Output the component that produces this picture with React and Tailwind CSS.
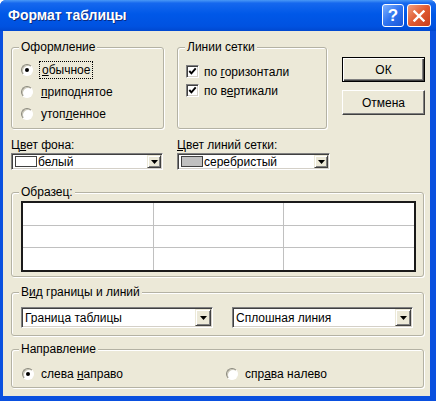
import React from "react";

const font = { fontFamily: '"Liberation Sans", Arial, sans-serif' };

function Radio({ checked }) {
  return (
    <span className="flex h-[12px] w-[12px] shrink-0 items-center justify-center rounded-full border border-t-[#8a887c] border-l-[#8a887c] border-b-white border-r-white bg-white shadow-[inset_1px_1px_0_#c9c6b6]">
      {checked && <span className="h-[4px] w-[4px] rounded-full bg-black" />}
    </span>
  );
}

function Checkbox() {
  return (
    <span className="flex h-[13px] w-[13px] shrink-0 items-center justify-center border border-t-[#808080] border-l-[#808080] border-b-white border-r-white bg-white shadow-[inset_1px_1px_0_#404040,inset_-1px_-1px_0_#d4d0c8]">
      <svg width="9" height="9" viewBox="0 0 9 9">
        <path d="M1.3 4l2.1 2.3 4.3-5" fill="none" stroke="#000" strokeWidth="1.9" />
      </svg>
    </span>
  );
}

function DropBtn({ big }) {
  return (
    <span
      className={
        "flex shrink-0 items-center justify-center border border-t-[#ece9d8] border-l-[#ece9d8] border-b-[#404040] border-r-[#404040] bg-[#ece9d8] shadow-[inset_1px_1px_0_#fff,inset_-1px_-1px_0_#808080] " +
        (big ? "h-[17px] w-[16px]" : "h-[13px] w-[14px]")
      }
    >
      <svg width="7" height="4" viewBox="0 0 7 4">
        <polygon points="0,0 7,0 3.5,4" fill="#000" />
      </svg>
    </span>
  );
}

function Combo({ className, swatch, text, big }) {
  return (
    <div
      className={
        "flex items-center border border-t-[#808080] border-l-[#808080] border-b-white border-r-white bg-white p-[1px] shadow-[inset_1px_1px_0_#404040,inset_-1px_-1px_0_#d4d0c8] " +
        className
      }
    >
      {swatch && (
        <span className={"ml-[2px] h-[11px] w-[22px] shrink-0 border border-[#404040] " + swatch} />
      )}
      <span className={"flex-1 truncate text-[12px] leading-none text-black " + (swatch ? "pl-[1px]" : "pl-[2px]")}>
        {text}
      </span>
      <DropBtn big={big} />
    </div>
  );
}

function Group({ label, className, children }) {
  return (
    <fieldset
      className={
        "rounded-[3px] border border-[#b4b2a4] shadow-[1px_1px_0_#fff,inset_1px_1px_0_#fff] " + className
      }
    >
      <legend className="ml-[7px] h-[14px] bg-[#ece9d8] px-[2px] text-[12px] leading-[14px] text-black">
        {label}
      </legend>
      {children}
    </fieldset>
  );
}

export default function App() {
  return (
    <div style={font} className="flex h-[401px] w-[436px] flex-col rounded-t-[6px] bg-[#0a50df]">
      {/* title bar */}
      <div className="flex h-[31px] shrink-0 items-center rounded-t-[6px] bg-[linear-gradient(to_bottom,#4a98f6_0%,#1668ee_10%,#0058e8_45%,#0052e0_85%,#0048d0_100%)] pl-[8px] pr-[5px]">
        <span className="flex-1 text-[14px] font-bold text-white [text-shadow:1px_1px_0_#0a2a80]">
          Формат таблицы
        </span>
        <div className="flex gap-[3px]">
          <span className="flex h-[23px] w-[22px] items-center justify-center rounded-[3px] border border-white bg-[linear-gradient(135deg,#7fb2ff_0%,#2f74f0_50%,#1a56d8_100%)] text-[17px] font-bold leading-none text-white">
            ?
          </span>
          <span className="flex h-[23px] w-[24px] items-center justify-center rounded-[3px] border border-white bg-[linear-gradient(135deg,#f0a080_0%,#e05a30_50%,#c83c1a_100%)]">
            <svg width="12" height="12" viewBox="0 0 12 12">
              <path d="M1.5 1.5l9 9M10.5 1.5l-9 9" stroke="#fff" strokeWidth="2.4" strokeLinecap="square" />
            </svg>
          </span>
        </div>
      </div>

      {/* client area */}
      <div className="mb-[5px] ml-[3px] mr-[6px] flex flex-1 flex-col bg-[#ece9d8] text-[12px] text-black">
        {/* row 1 */}
        <div className="flex pl-[8px] pt-[9px]">
          <Group label="Оформление" className="h-[89px] w-[153px]">
            <div className="flex flex-col pl-[9px] pt-[5px]">
              <div className="flex h-[22px] items-center gap-[6px]">
                <Radio checked />
                <span className="border border-dotted border-black px-[2px] py-[1px] leading-[14px]">
                  <u>о</u>бычное
                </span>
              </div>
              <div className="flex h-[22px] items-center gap-[7px]">
                <Radio />
                <span className="px-[1px]">
                  <u>п</u>риподнятое
                </span>
              </div>
              <div className="flex h-[22px] items-center gap-[7px]">
                <Radio />
                <span className="px-[1px]">
                  утоп<u>л</u>енное
                </span>
              </div>
            </div>
          </Group>

          <Group label="Линии сетки" className="ml-[13px] h-[89px] w-[150px]">
            <div className="flex flex-col pl-[8px] pt-[8px]">
              <div className="flex h-[19px] items-center gap-[5px]">
                <Checkbox />
                <span>
                  по <u>г</u>оризонтали
                </span>
              </div>
              <div className="flex h-[19px] items-center gap-[5px]">
                <Checkbox />
                <span>
                  по в<u>е</u>ртикали
                </span>
              </div>
            </div>
          </Group>

          <div className="ml-[15px] mt-[17px] flex w-[83px] flex-col gap-[8px]">
            <button className="flex h-[25px] items-center justify-center border border-black bg-[#ece9d8] text-[12px] shadow-[inset_1px_1px_0_#fff,inset_-1px_-1px_0_#404040,inset_-2px_-2px_0_#808080]">
              ОК
            </button>
            <button className="flex h-[25px] items-center justify-center border border-t-white border-l-white border-b-[#404040] border-r-[#404040] bg-[#ece9d8] text-[12px] shadow-[inset_-1px_-1px_0_#808080]">
              Отмена
            </button>
          </div>
        </div>

        {/* row 2: colours */}
        <div className="mt-[9px] flex gap-[14px] pl-[8px]">
          <div className="flex w-[152px] flex-col">
            <span className="h-[14px] leading-[14px]">
              Ц<u>в</u>ет фона:
            </span>
            <Combo className="mt-[1px] h-[17px]" swatch="bg-white" text="белый" />
          </div>
          <div className="flex w-[153px] flex-col">
            <span className="h-[14px] leading-[14px]">
              <u>Ц</u>вет линий сетки:
            </span>
            <Combo className="mt-[1px] h-[17px]" swatch="bg-[#c0c0c0]" text="серебристый" />
          </div>
        </div>

        {/* sample */}
        <Group label="Образец:" className="ml-[8px] mt-[15px] h-[92px] w-[413px]">
          <div className="pl-[9px] pt-[2px]">
            <div className="grid h-[71px] w-[395px] grid-cols-3 grid-rows-3 gap-[1px] border-2 border-[#1a1a1a] bg-[#c0c0c0]">
              {Array.from({ length: 9 }).map((_, i) => (
                <div key={i} className="bg-white" />
              ))}
            </div>
          </div>
        </Group>

        {/* border style */}
        <Group label={<span>В<u>и</u>д границы и линий</span>} className="ml-[8px] mt-[8px] h-[51px] w-[413px]">
          <div className="flex gap-[19px] pl-[9px] pt-[8px]">
            <Combo className="h-[21px] w-[192px]" text="Граница таблицы" big />
            <Combo className="h-[21px] w-[181px]" text="Сплошная линия" big />
          </div>
        </Group>

        {/* direction */}
        <Group label="Направление" className="ml-[8px] mt-[6px] h-[46px] w-[413px]">
          <div className="flex pl-[10px] pt-[8px]">
            <div className="flex h-[20px] w-[204px] items-center gap-[7px]">
              <Radio checked />
              <span>
                слева <u>н</u>аправо
              </span>
            </div>
            <div className="flex h-[20px] items-center gap-[7px]">
              <Radio />
              <span>
                спр<u>а</u>ва налево
              </span>
            </div>
          </div>
        </Group>
      </div>
    </div>
  );
}
